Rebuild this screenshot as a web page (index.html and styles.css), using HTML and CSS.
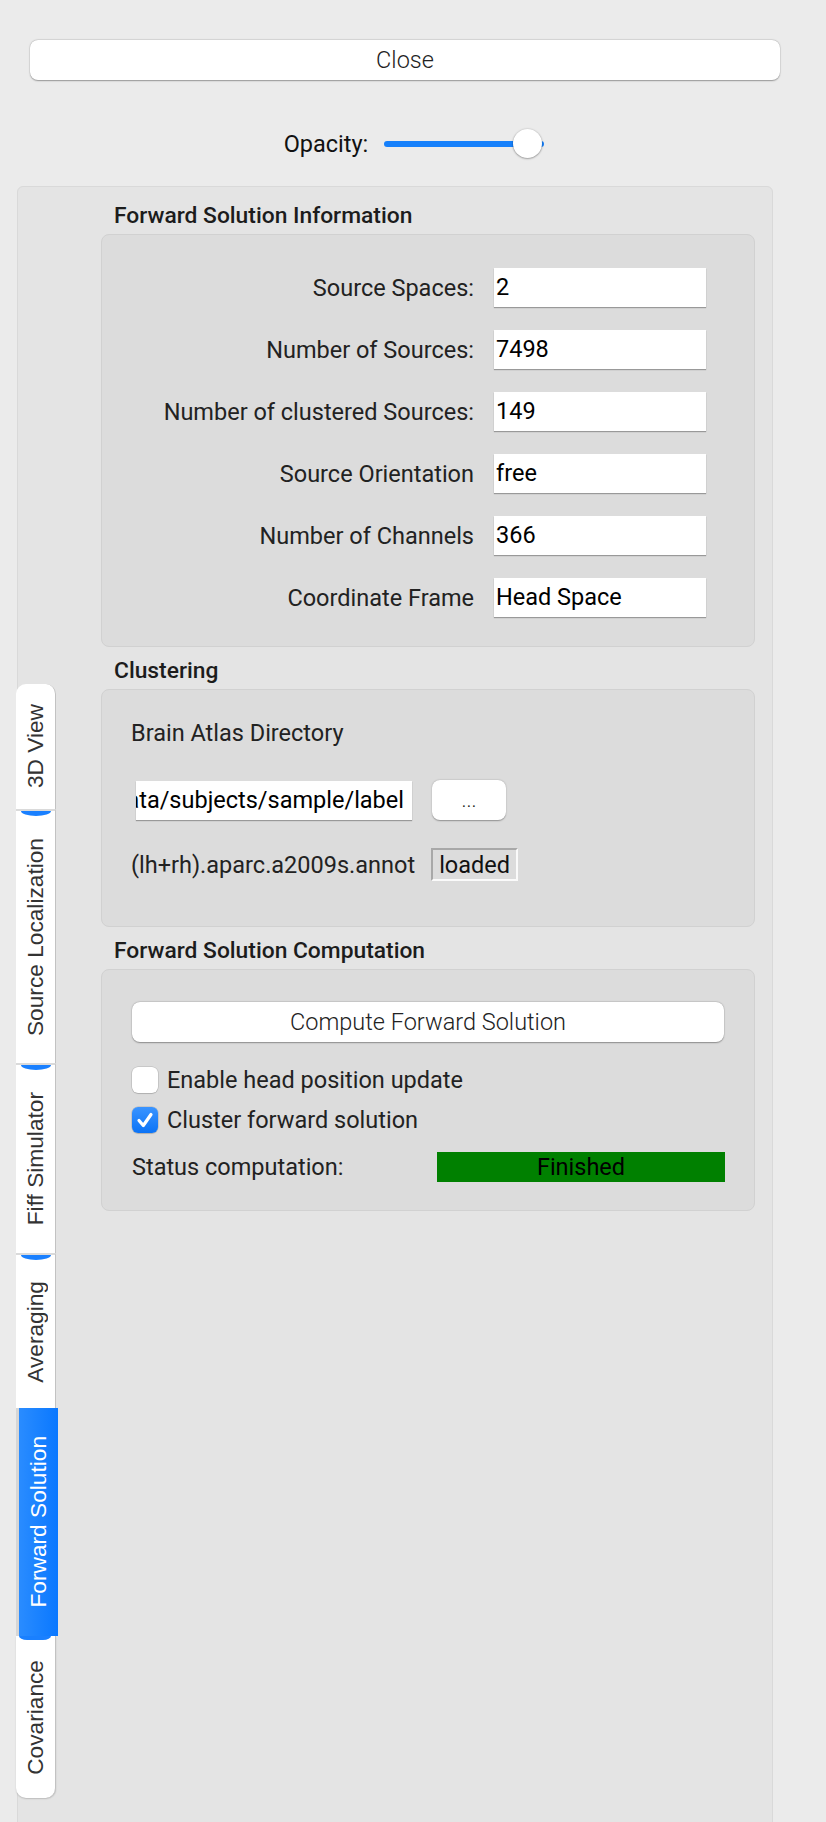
FILE: index.html
```html
<!DOCTYPE html>
<html>
<head>
<meta charset="utf-8">
<link rel="stylesheet" href="styles.css">
</head>
<body>
<div class="app">
  <button class="close-btn">Close</button>

  <div class="opacity-row">
    <span class="opacity-label">Opacity:</span>
    <div class="slider">
      <div class="slider-track"></div>
      <div class="slider-thumb"></div>
    </div>
  </div>

  <div class="panel">
    <div class="tabs">
      <div class="tab tab-3d"><span class="tab-label">3D View</span></div>
      <div class="tab tab-stub tab-srcloc"><span class="tab-label">Source Localization</span></div>
      <div class="tab tab-stub tab-fiff"><span class="tab-label">Fiff Simulator</span></div>
      <div class="tab tab-stub tab-avg"><span class="tab-label">Averaging</span></div>
      <div class="tab tab-active"><span class="tab-label">Forward Solution</span></div>
      <div class="tab tab-cov"><span class="tab-label">Covariance</span></div>
    </div>

    <div class="content">
      <h2 class="section-title">Forward Solution Information</h2>
      <div class="group info-grid">
        <span class="field-label">Source Spaces:</span>
        <div class="field-value">2</div>
        <span class="field-label">Number of Sources:</span>
        <div class="field-value">7498</div>
        <span class="field-label">Number of clustered Sources:</span>
        <div class="field-value">149</div>
        <span class="field-label">Source Orientation</span>
        <div class="field-value">free</div>
        <span class="field-label">Number of Channels</span>
        <div class="field-value">366</div>
        <span class="field-label">Coordinate Frame</span>
        <div class="field-value">Head Space</div>
      </div>

      <h2 class="section-title">Clustering</h2>
      <div class="group cluster">
        <div class="atlas-title">Brain Atlas Directory</div>
        <div class="atlas-row">
          <div class="path-input"><span>MNE-sample-data/subjects/sample/label</span></div>
          <button class="dots-btn">...</button>
        </div>
        <div class="annot-row">
          <span class="annot-label">(lh+rh).aparc.a2009s.annot</span>
          <span class="loaded">loaded</span>
        </div>
      </div>

      <h2 class="section-title">Forward Solution Computation</h2>
      <div class="group compute">
        <button class="compute-btn">Compute Forward Solution</button>
        <div class="check-row check-first">
          <span class="checkbox"></span>
          <span class="check-text">Enable head position update</span>
        </div>
        <div class="check-row check-second">
          <span class="checkbox checked">
            <svg width="26" height="26" viewBox="0 0 26 26"><path d="M7 13.5 L11.3 18.5 L19 7.5" fill="none" stroke="#fff" stroke-width="3.2" stroke-linecap="round" stroke-linejoin="round"/></svg>
          </span>
          <span class="check-text">Cluster forward solution</span>
        </div>
        <div class="status-row">
          <span class="status-label">Status computation:</span>
          <span class="status-bar">Finished</span>
        </div>
      </div>
    </div>
  </div>
</div>
</body>
</html>
```

FILE: styles.css
```css
* { box-sizing: border-box; }

html, body { margin: 0; padding: 0; }

body {
  width: 826px;
  height: 1822px;
  overflow: hidden;
  background: #ebebeb;
  font-family: Roboto, "Liberation Sans", sans-serif;
  font-size: 23.5px;
  color: #222;
}

.app { padding-top: 40px; }

button {
  font-family: Roboto, "Liberation Sans", sans-serif;
  padding: 0;
  border: none;
  cursor: default;
}

.close-btn {
  display: block;
  margin-left: 30px;
  width: 750px;
  height: 40px;
  background: #fff;
  border-radius: 8px;
  box-shadow: 0 0.5px 1.5px rgba(0,0,0,0.35), 0 0 0 0.5px rgba(0,0,0,0.06);
  font-size: 23.5px;
  font-weight: 300;
  color: #222;
}

.opacity-row {
  display: flex;
  justify-content: center;
  align-items: center;
  gap: 16px;
  margin-top: 49px;
  height: 30px;
  padding-left: 2px;
}

.opacity-label { color: #111; }

.slider { position: relative; width: 160px; height: 30px; }

.slider-track {
  position: absolute;
  left: 0; right: 0; top: 12px;
  height: 6px;
  border-radius: 3px;
  background: #1680fb;
}

.slider-thumb {
  position: absolute;
  left: 129px; top: 0;
  width: 29px; height: 29px;
  border-radius: 50%;
  background: #fff;
  box-shadow: 0 0.5px 2px rgba(0,0,0,0.5);
}

.panel {
  margin: 27px 0 0 17px;
  width: 756px;
  height: 1700px;
  background: #e4e4e4;
  border: 1px solid #d9d9d9;
  border-radius: 6px 6px 0 0;
  display: flex;
  align-items: flex-start;
}

/* vertical tabs */
.tabs {
  flex: none;
  width: 42px;
  margin: 497px 0 0 -2px;
  display: flex;
  flex-direction: column;
}

.tab {
  position: relative;
  width: 40px;
  background: #fff;
  border-right: 1px solid #c2c2c2;
  display: flex;
  align-items: center;
  justify-content: center;
}

.tab-label {
  writing-mode: vertical-rl;
  transform: rotate(180deg);
  font-family: "Liberation Sans", Arial, sans-serif;
  font-size: 22.7px;
  color: #333;
  white-space: nowrap;
}

.tab-stub { border-top: 2px solid #dadada; }

.tab-stub::before {
  content: "";
  position: absolute;
  top: 0; left: 5px;
  width: 30px; height: 5px;
  background: #1a80ff;
  border-radius: 0 0 15px 15px / 0 0 5px 5px;
}

.tab-3d { height: 125px; border-radius: 10px 10px 0 0; }
.tab-srcloc { height: 254px; }
.tab-fiff { height: 190px; }
.tab-avg { height: 155px; }

.tab-active {
  width: 42px;
  height: 228px;
  border-right: none;
  border-left: 3px solid #d6d6d6;
  background: linear-gradient(to right, #2a8cff, #0a78ff);
  z-index: 1;
}

.tab-active::after {
  content: "";
  position: absolute;
  top: 100%; left: 0;
  width: 32px; height: 4px;
  background: #1a80ff;
  border-radius: 0 0 8px 8px / 0 0 4px 4px;
}

.tab-active .tab-label { color: #fff; }

.tab-cov {
  height: 162px;
  border-radius: 0 0 10px 10px;
  box-shadow: 0 1px 1.5px rgba(0,0,0,0.18);
}

/* content */
.content {
  flex: none;
  width: 654px;
  margin-left: 43px;
  padding-top: 16px;
}

.section-title {
  margin: 0 0 5px 13px;
  font-size: 22.8px;
  font-weight: 500;
  line-height: 26px;
  color: #1c1c1c;
}

.group {
  background: #dcdcdc;
  border: 1px solid #d1d1d1;
  border-radius: 8px;
  margin-bottom: 11px;
}

.info-grid {
  display: grid;
  grid-template-columns: 1fr 212px;
  column-gap: 20px;
  row-gap: 23px;
  align-items: center;
  padding: 33px 48px 29px 0;
}

.field-label { text-align: right; white-space: nowrap; }

.field-value {
  height: 39px;
  background: #fff;
  box-shadow: 0 1px 1px rgba(0,0,0,0.3);
  line-height: 39px;
  padding-left: 2px;
  color: #000;
}

.cluster { padding: 28px 0 45px 29px; }

.atlas-title { line-height: 30px; }

.atlas-row {
  display: flex;
  align-items: center;
  height: 40px;
  margin-top: 32px;
}

.path-input {
  margin-left: 5px;
  width: 276px;
  height: 39px;
  background: #fff;
  box-shadow: 0 1px 1px rgba(0,0,0,0.3);
  overflow: hidden;
  display: flex;
  justify-content: flex-end;
  white-space: nowrap;
  padding-right: 8px;
  line-height: 39px;
  color: #000;
}

.path-input span { flex: none; }

.dots-btn {
  margin-left: 20px;
  width: 74px;
  height: 40px;
  border-radius: 8px;
  background: #fff;
  box-shadow: 0 0.5px 1.5px rgba(0,0,0,0.35);
  font-size: 21px;
  font-weight: 300;
  color: #222;
}

.annot-row {
  display: flex;
  align-items: center;
  height: 33px;
  margin-top: 28px;
}

.loaded {
  margin-left: 16px;
  width: 87px;
  height: 33px;
  border: 2px solid;
  border-color: #a8a8a8 #fafafa #fafafa #a8a8a8;
  display: flex;
  align-items: center;
  justify-content: center;
  color: #111;
}

.compute { padding: 32px 29px 28px 30px; }

.compute-btn {
  display: block;
  width: 592px;
  height: 40px;
  background: #fff;
  border-radius: 8px;
  box-shadow: 0 0.5px 1.5px rgba(0,0,0,0.35), 0 0 0 0.5px rgba(0,0,0,0.06);
  font-size: 23.5px;
  font-weight: 300;
  color: #222;
}

.check-row {
  display: flex;
  align-items: center;
  gap: 9px;
}

.check-first { height: 26px; margin-top: 25px; }
.check-second { height: 27px; margin-top: 13px; }

.checkbox {
  flex: none;
  width: 26px;
  height: 26px;
  border-radius: 6px;
  background: #fff;
  box-shadow: 0 0 0 0.5px rgba(0,0,0,0.18), 0 1px 1px rgba(0,0,0,0.12);
  display: flex;
  align-items: center;
  justify-content: center;
}

.checkbox.checked {
  background: linear-gradient(#3a94ff, #0b73f6);
}

.check-text { color: #222; }

.status-row {
  display: flex;
  align-items: center;
  height: 30px;
  margin-top: 19px;
}

.status-label { width: 305px; flex: none; color: #222; }

.status-bar {
  width: 290px;
  height: 30px;
  background: #008000;
  color: #000;
  text-align: center;
  line-height: 30px;
}
```
